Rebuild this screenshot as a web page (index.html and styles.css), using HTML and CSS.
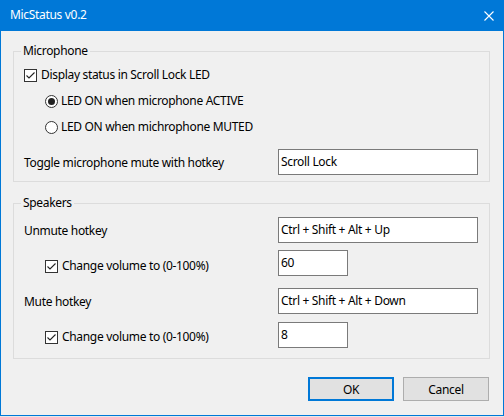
FILE: index.html
```html
<!DOCTYPE html>
<html>
<head>
<meta charset="utf-8">
<title>MicStatus v0.2</title>
<link rel="stylesheet" href="styles.css">
</head>
<body>
<div class="window">
  <div class="titlebar">
    <span class="title">MicStatus v0.2</span>
    <svg class="close" width="10" height="10" viewBox="0 0 10 10"><path d="M0.5 0.5 L9.5 9.5 M9.5 0.5 L0.5 9.5" stroke="#fff" stroke-width="1.1" fill="none"/></svg>
  </div>
  <div class="content">
    <fieldset class="group group-mic">
      <legend>Microphone</legend>
      <div class="opt opt-first">
        <span class="checkbox"><svg width="11" height="11" viewBox="0 0 11 11"><polyline points="1.5,5.5 4,8 9.5,2.5" fill="none" stroke="#222" stroke-width="1.1"/></svg></span>
        <span>Display status in Scroll Lock LED</span>
      </div>
      <div class="opt opt-indent opt-radio">
        <span class="radio radio-on"></span>
        <span>LED ON when microphone ACTIVE</span>
      </div>
      <div class="opt opt-indent opt-radio">
        <span class="radio"></span>
        <span>LED ON when michrophone MUTED</span>
      </div>
      <div class="field field-toggle">
        <span class="field-label">Toggle microphone mute with hotkey</span>
        <div class="input input-wide">Scroll Lock</div>
      </div>
    </fieldset>

    <fieldset class="group group-spk">
      <legend>Speakers</legend>
      <div class="field field-a">
        <span class="field-label">Unmute hotkey</span>
        <div class="input input-wide">Ctrl + Shift + Alt + Up</div>
      </div>
      <div class="field field-b">
        <div class="opt opt-indent opt-sub">
          <span class="checkbox"><svg width="11" height="11" viewBox="0 0 11 11"><polyline points="1.5,5.5 4,8 9.5,2.5" fill="none" stroke="#222" stroke-width="1.1"/></svg></span>
          <span>Change volume to (0-100%)</span>
        </div>
        <div class="input input-small">60</div>
      </div>
      <div class="field field-c">
        <span class="field-label">Mute hotkey</span>
        <div class="input input-wide">Ctrl + Shift + Alt + Down</div>
      </div>
      <div class="field field-d">
        <div class="opt opt-indent opt-sub">
          <span class="checkbox"><svg width="11" height="11" viewBox="0 0 11 11"><polyline points="1.5,5.5 4,8 9.5,2.5" fill="none" stroke="#222" stroke-width="1.1"/></svg></span>
          <span>Change volume to (0-100%)</span>
        </div>
        <div class="input input-small">8</div>
      </div>
    </fieldset>

    <div class="buttons">
      <button class="btn btn-default">OK</button>
      <button class="btn">Cancel</button>
    </div>
  </div>
</div>
</body>
</html>
```
FILE: styles.css
```css
* { box-sizing: border-box; }
html, body {
  margin: 0;
  padding: 0;
  background: #e8e8e8;
}
body {
  font-family: "Noto Sans", "Open Sans", sans-serif;
  font-size: 12px;
  letter-spacing: -0.32px;
  color: #000;
  width: 504px;
  height: 417px;
  overflow: hidden;
}
.window {
  width: 504px;
  height: 416px;
  background: #f0f0f0;
  border: 1px solid #0078d7;
  border-top: none;
  display: flex;
  flex-direction: column;
}
.titlebar {
  height: 31px;
  margin: 0 -1px;
  background: #0078d7;
  color: #fff;
  display: flex;
  align-items: center;
  justify-content: space-between;
  padding: 0 10px 1px 10px;
}
.title {
  font-size: 12px;
  line-height: 16px;
}
.close {
  display: block;
  margin-right: 0;
  margin-top: 1px;
}
.content {
  padding: 12px 13px 0 12px;
  display: flex;
  flex-direction: column;
}
.group {
  margin: 0;
  padding: 0 10px;
  border: 1px solid #dcdcdc;
  min-width: 0;
  width: 477px;
}
.group legend {
  margin-left: -3px;
  padding: 0 2px;
  line-height: 16px;
  font-size: 12px;
}
.group-mic { padding-bottom: 6px; }
.group-spk { margin-top: 13px; padding-bottom: 10px; }

.opt {
  display: flex;
  align-items: center;
  height: 16px;
  line-height: 16px;
  white-space: nowrap;
}
.opt-first { margin-top: 8px; }
.opt-radio { margin-top: 10px; }
.opt-indent { padding-left: 21px; }

.checkbox {
  width: 13px;
  height: 13px;
  border: 1px solid #333;
  background: #fff;
  margin-right: 4px;
  display: flex;
  align-items: center;
  justify-content: center;
  flex: none;
}
.checkbox svg { display: block; }
.radio {
  width: 13px;
  height: 13px;
  border: 1px solid #333;
  border-radius: 50%;
  background: #fff;
  margin-right: 3px;
  flex: none;
  display: flex;
  align-items: center;
  justify-content: center;
}
.radio-on::after {
  content: "";
  width: 7px;
  height: 7px;
  border-radius: 50%;
  background: #222;
}

.field {
  display: grid;
  grid-template-columns: 254px auto;
  align-items: center;
}
.field-label {
  line-height: 16px;
  white-space: nowrap;
  padding-top: 2px;
}
.field-toggle { margin-top: 14px; }
.field-a { margin-top: 6px; }
.field-b { margin-top: 7px; align-items: start; }
.field-c { margin-top: 12px; }
.field-d { margin-top: 8px; align-items: start; }
.opt-sub { margin-top: 8px; }
.field-d .opt-sub { margin-top: 7px; }

.input {
  height: 26px;
  border: 1px solid #7a7a7a;
  background: #fff;
  padding: 0 2px;
  line-height: 23px;
  white-space: nowrap;
}
.input-wide { width: 200px; }
.input-small { width: 70px; }

.buttons {
  margin-top: 18px;
  display: flex;
  justify-content: flex-end;
  gap: 9px;
  padding-right: 1px;
}
.btn {
  width: 86px;
  height: 24px;
  font-family: inherit;
  font-size: 12px;
  letter-spacing: inherit;
  color: #000;
  background: #e1e1e1;
  border: 1px solid #adadad;
  border-radius: 0;
  padding: 0;
}
.btn-default {
  border: 2px solid #0078d7;
}
```
